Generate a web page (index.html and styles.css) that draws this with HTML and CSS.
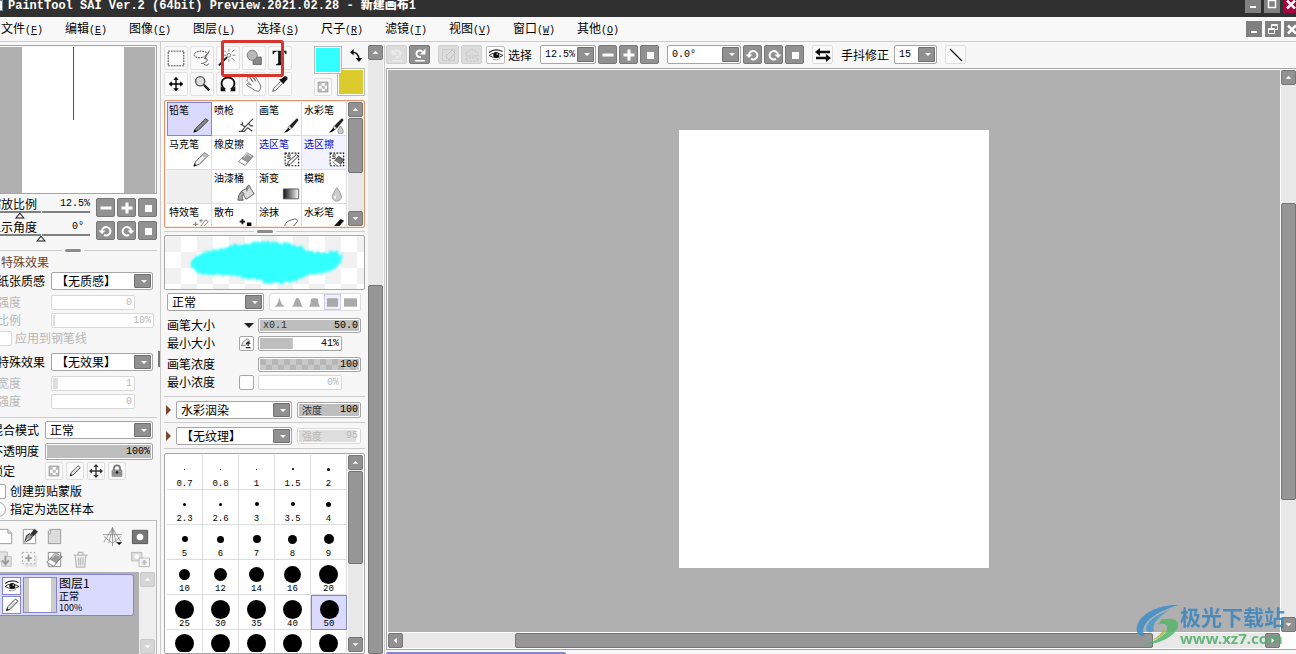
FILE: index.html
```html
<!DOCTYPE html>
<html lang="zh-CN">
<head>
<meta charset="utf-8">
<title>PaintTool SAI Ver.2</title>
<link rel="stylesheet" href="styles.css">
</head>
<body>
<svg class="defs" aria-hidden="true">
  <symbol id="minus" viewBox="0 0 16 16"><path d="M2.500 8h11" stroke="#fff" stroke-width="3"/></symbol>
  <symbol id="plus" viewBox="0 0 16 16"><path d="M2.500 8h11M8 2.500v11" stroke="#fff" stroke-width="3"/></symbol>
  <symbol id="stop" viewBox="0 0 16 16"><path d="M5 5h7v7H5z" fill="#fff"/></symbol>
  <symbol id="ccw" viewBox="0 0 16 16"><path d="M4 8a4.200 4.200 0 1 1 2 3.800" fill="none" stroke="#fff" stroke-width="2"/><path d="M0.500 7.500h7L4 11z" fill="#fff"/></symbol>
  <symbol id="cw" viewBox="0 0 16 16"><path d="M12 8a4.200 4.200 0 1 0-2 3.800" fill="none" stroke="#fff" stroke-width="2"/><path d="M8.500 7.500h7L12 11z" fill="#fff"/></symbol>
  <symbol id="up" viewBox="0 0 16 16"><path d="M4.500 9.500h7L8 6z" fill="#fff"/></symbol>
  <symbol id="down" viewBox="0 0 16 16"><path d="M4.500 6.500h7L8 10z" fill="#fff"/></symbol>
  <symbol id="left" viewBox="0 0 16 16"><path d="M9.500 4.500v7L6 8z" fill="#fff"/></symbol>
  <symbol id="right" viewBox="0 0 16 16"><path d="M6.500 4.500v7L10 8z" fill="#fff"/></symbol>
  <symbol id="redo" viewBox="0 0 16 16"><path d="M9 10H7A3.300 3.300 0 1 1 10.500 5" fill="none" stroke="#fff" stroke-width="2"/><path d="M13.500 1.500v6H8zM3 13h10v1.500H3z" fill="#fff"/></symbol>
  <symbol id="undo" viewBox="0 0 16 16"><path d="M7 10h2A3.300 3.300 0 1 0 5.500 5" fill="none" stroke="#ebebeb" stroke-width="2"/><path d="M2.500 1.500v6H8zM3 13h10v1.500H3z" fill="#ebebeb"/></symbol>
  <symbol id="eye" viewBox="0 0 16 16"><path d="M1 5.500Q7 1 14.500 4.500" fill="none" stroke="#222" stroke-width="1.200"/><path d="M1 8.500Q7 3.500 15 8.500Q8 12.500 1 8.500z" fill="#fff" stroke="#333"/><circle cx="8.300" cy="8" r="3" fill="#111"/><circle cx="9.300" cy="7" r=".8" fill="#fff"/><path d="M5 12.500q4 1 7-1" fill="none" stroke="#999"/></symbol>
  <symbol id="checker" viewBox="0 0 16 16"><path d="M2.500 2.500h11v11h-11z" fill="#fff" stroke="#777"/><path d="M3 3h3.500v3.500H3zM10 3h3v3.500h-3zM6.500 6.500H10V10H6.500zM3 10h3.500v3H3zM10 10h3v3h-3z" fill="#bbb"/></symbol>
  <symbol id="pencil" viewBox="0 0 16 16"><path d="M2.500 13.500l1.500-4 7.500-7.500 2.500 2.300-7.500 7.700z" fill="#f8f8f8" stroke="#444"/><path d="M2 14l1-3 2 2z" fill="#222"/><path d="M5.500 11l6-6" stroke="#aaa"/></symbol>
  <symbol id="move" viewBox="0 0 16 16"><path d="M8 2v12M2 8h12" stroke="currentColor" stroke-width="1.500"/><path d="M8 0l3 3.500H5zM8 16l3-3.500H5zM0 8l3.500-3v6zM16 8l-3.500-3v6z" fill="currentColor"/></symbol>
  <symbol id="lock" viewBox="0 0 16 16"><path d="M4.500 7V5a3.500 3.500 0 0 1 7 0v2" fill="none" stroke="#777" stroke-width="2"/><path d="M2.500 7h11v7h-11z" fill="#aaa" stroke="#777"/><path d="M8 8.500v4M3 9.500h10M3 11.500h10" stroke="#777"/><circle cx="8" cy="9.500" r="1.500" fill="#222"/></symbol>
  <symbol id="brush" viewBox="0 0 20 20"><path d="M8 11l8.500-8.500 2 2L11 14z" fill="#222"/><path d="M6.500 12.500L8.500 11l2 2.500-2 2z" fill="#ddd" stroke="#666" stroke-width=".7"/><path d="M7 13l2 2-3 2.500-4 1z" fill="#111"/></symbol>
  <symbol id="dashbox" viewBox="0 0 20 20"><path d="M3.500 3.500h15v14h-15z" fill="#fff" stroke="#111" stroke-width="1.200" stroke-dasharray="2 1.500"/><path d="M10 5.500H6.500v2H9v2H5.500" fill="none" stroke="#333"/></symbol>
  <symbol id="eraser" viewBox="0 0 20 20"><path d="M2 13l9-10 7 4-9 10z" fill="#999" stroke="#666" stroke-width=".8"/><path d="M2 13l3-3.500 7 4-3 3.500z" fill="#fff" stroke="#888" stroke-width=".8"/><path d="M7.500 8L11 4l5 3" fill="none" stroke="#ccc" stroke-width="1.500"/></symbol>
  <symbol id="page" viewBox="0 0 20 20"><path d="M3.500 2.500h9l4 4v11h-13z" fill="#fff" stroke="#999"/><path d="M12.500 2.500v4h4" fill="#ddd" stroke="#999"/></symbol>
</svg>

<header class="title">
  <i class="appicon"></i>
  <h1>PaintTool SAI Ver.2 (64bit) Preview.2021.02.28 - <b>新建画布1</b></h1>
  <div class="winbtns">
    <button aria-label="最小化"><svg viewBox="0 0 16 16"><path d="M5 9h6v2H5z" fill="#fff"/></svg></button>
    <button aria-label="最大化"><svg viewBox="0 0 16 16"><path d="M4.500 3.500h7v7h-7z" fill="none" stroke="#fff" stroke-width="1.500"/></svg></button>
    <button class="close" aria-label="关闭"><svg viewBox="0 0 16 16"><path d="M4 3.500l8 8M12 3.500l-8 8" stroke="#fff" stroke-width="2.500"/></svg></button>
  </div>
</header>

<nav class="menu">
  <a href="#">文件<span>(<u>F</u>)</span></a>
  <a href="#">编辑<span>(<u>E</u>)</span></a>
  <a href="#">图像<span>(<u>C</u>)</span></a>
  <a href="#">图层<span>(<u>L</u>)</span></a>
  <a href="#">选择<span>(<u>S</u>)</span></a>
  <a href="#">尺子<span>(<u>R</u>)</span></a>
  <a href="#">滤镜<span>(<u>T</u>)</span></a>
  <a href="#">视图<span>(<u>V</u>)</span></a>
  <a href="#">窗口<span>(<u>W</u>)</span></a>
  <a href="#">其他<span>(<u>O</u>)</span></a>
  <div class="winbtns">
    <button aria-label="最小化画布"><svg viewBox="0 0 16 16"><path d="M5 10h6v2H5z" fill="#fff"/></svg></button>
    <button aria-label="还原画布"><svg viewBox="0 0 16 16"><path d="M6.500 7V3.500h6v5H10M3.500 7.500h6v5h-6zM3.500 8.500h6M6.500 4.500h6" fill="none" stroke="#fff"/></svg></button>
    <button aria-label="关闭画布"><svg viewBox="0 0 16 16"><path d="M4 4.500l8 8M12 4.500l-8 8" stroke="#fff" stroke-width="2.500"/></svg></button>
  </div>
</nav>

<main class="work">
  <aside class="leftcol">
    <div class="leftin">
      <div class="navigator"><div class="navpage"><i></i></div></div>
      <div class="navrow">
        <div class="slide"><label for="zoomr">缩放比例</label><output>12.5%</output><input id="zoomr" type="range" value="26"></div>
        <button class="sq" aria-label="缩小"><svg><use href="#minus"/></svg></button><button class="sq" aria-label="放大"><svg><use href="#plus"/></svg></button><button class="sq" aria-label="重置缩放"><svg><use href="#stop"/></svg></button>
      </div>
      <div class="navrow">
        <div class="slide"><label for="rotr">显示角度</label><output>0° </output><input id="rotr" type="range" value="50"></div>
        <button class="sq" aria-label="左旋"><svg><use href="#ccw"/></svg></button><button class="sq" aria-label="右旋"><svg><use href="#cw"/></svg></button><button class="sq" aria-label="重置角度"><svg><use href="#stop"/></svg></button>
      </div>
      <div class="split nav"><i></i></div>

      <section class="fx">
        <h2>特殊效果</h2>
        <div class="row tall"><label for="paper">纸张质感</label><span class="dd wide"><select id="paper"><option>【无质感】</option></select></span></div>
        <div class="row off"><label for="f1">强度</label><span class="num short"><input id="f1" value="0" disabled></span></div>
        <div class="row off"><label for="f2">比例</label><span class="num"><input id="f2" value="10%" disabled class="f2p"></span></div>
        <div class="row off check"><input id="pen" type="checkbox" disabled><label for="pen">应用到钢笔线</label></div>
        <div class="row tall second"><label for="eff">特殊效果</label><span class="dd wide"><select id="eff"><option>【无效果】</option></select></span></div>
        <div class="row off"><label for="f3">宽度</label><span class="num short"><input id="f3" value="1" disabled class="f5p"></span></div>
        <div class="row off"><label for="f4">强度</label><span class="num short"><input id="f4" value="0" disabled></span></div>
      </section>

      <section class="blend">
        <div class="row tall"><label for="mode">混合模式</label><span class="dd wide"><select id="mode"><option>正常</option></select></span></div>
        <div class="row"><label for="op">不透明度</label><span class="num big"><input id="op" value="100%" class="full"></span></div>
        <div class="row locks"><span class="lab">锁定</span>
          <button class="ic" aria-label="锁定透明"><svg><use href="#checker"/></svg></button>
          <button class="ic" aria-label="锁定绘画"><svg><use href="#pencil"/></svg></button>
          <button class="ic" aria-label="锁定移动"><svg><use href="#move"/></svg></button>
          <button class="ic" aria-label="全部锁定"><svg><use href="#lock"/></svg></button>
        </div>
        <div class="row check"><input id="clip" type="checkbox"><label for="clip">创建剪贴蒙版</label></div>
        <div class="row check"><input id="sel" type="radio"><label for="sel">指定为选区样本</label></div>
      </section>

      <section class="layers">
        <div class="ltools">
          <button aria-label="新建图层"><svg><use href="#page"/></svg></button>
          <button aria-label="新建钢笔图层"><svg viewBox="0 0 20 20"><path d="M3.500 2.500h13v15h-13z" fill="#fff" stroke="#999"/><path d="M5 16l2-7 3-2 3 3-2 3z" fill="#999" stroke="#222"/><path d="M11 7l4-5 4 3-5 5z" fill="#333"/><path d="M5 16l4-4" stroke="#fff"/></svg></button>
          <button aria-label="新建图层组"><svg viewBox="0 0 20 20"><path d="M3.500 4.500l2-2h11v15h-13z" fill="#ddd" stroke="#999"/><path d="M6 3v4l-2 1" fill="none" stroke="#aaa"/></svg></button>
          <span></span>
          <button aria-label="透视尺"><svg viewBox="0 0 20 20"><path d="M10 0v20M0 8h20M10 1L1 16M10 1l9 15M1 10l9 7 9-7M10 1L6 17M10 1l4 16" fill="none" stroke="#888" stroke-width=".8"/><path d="M14 16h6l-3 3z" fill="#000"/></svg></button>
          <button aria-label="图层蒙版"><svg viewBox="0 0 20 20"><path d="M1.500 3.500h16v14h-16z" fill="#777" stroke="#555"/><circle cx="9.500" cy="10.500" r="3.500" fill="#fff"/></svg></button>
          <button aria-label="向下转写"><svg viewBox="0 0 20 20"><path d="M3 2h9v5h4v10H6v-5H3z" fill="#e4e4e4" stroke="#bbb"/><path d="M10 6v8M6.500 11l3.500 4 3.500-4" fill="none" stroke="#999" stroke-width="2"/></svg></button>
          <button aria-label="复制图层"><svg viewBox="0 0 20 20"><path d="M5 6h13v12H5z" fill="#e4e4e4"/><path d="M2.500 2.500h13v12h-13z" fill="#f4f4f4" stroke="#aaa" stroke-dasharray="2 2"/><path d="M9 5v7M5.500 8.500h7" stroke="#999" stroke-width="2"/></svg></button>
          <button aria-label="清除图层"><svg viewBox="0 0 20 20"><path d="M3.500 2.500h13v15h-13z" fill="#fff" stroke="#888"/><use href="#eraser"/></svg></button>
          <button aria-label="删除图层"><svg viewBox="0 0 20 20"><path d="M2.500 5.500h15M7.500 5V2.500h5V5M4.500 6l1 12h9l1-12M8 8v8M10 8v8M12.500 8v8" fill="#eee" stroke="#bbb" stroke-width="1.300"/></svg></button>
          <span></span>
          <button aria-label="应用蒙版"><svg viewBox="0 0 20 20"><path d="M.5 2.500h11v9H.5z" fill="#ddd" stroke="#bbb"/><circle cx="6" cy="7" r="2.500" fill="#fff"/><path d="M8.500 8.500h11v9h-11z" fill="#f4f4f4" stroke="#bbb"/><path d="M14 10.500v5M11.500 13h5" stroke="#bbb" stroke-width="2"/></svg></button>
        </div>
        <div class="lbody">
          <div class="llist">
            <div class="layer">
              <div class="lflags"><button aria-label="显示"><svg><use href="#eye"/></svg></button><button aria-label="编辑"><svg><use href="#pencil"/></svg></button></div>
              <div class="thumb"></div>
              <div class="ltext"><b>图层1</b><span>正常</span><span>100%</span></div>
            </div>
          </div>
          <div class="sb pale"><button class="sbb" aria-label="向上"><svg><use href="#up"/></svg></button><span class="track"></span><button class="sbb" aria-label="向下"><svg><use href="#down"/></svg></button></div>
        </div>
      </section>
    </div>
    <i class="grip"></i>
  </aside>

  <aside class="midcol">
    <div class="mid">
      <div class="tools">
        <div class="tgrid">
          <button aria-label="矩形选择"><svg viewBox="0 0 24 24"><path d="M3.500 4.500h17v16h-17z" fill="none" stroke="#333" stroke-dasharray="2 1"/></svg></button>
          <button aria-label="套索"><svg viewBox="0 0 24 24"><path d="M17 6C12 3 3 5 3.500 9c.5 3 8 4 11 1" fill="none" stroke="#333" stroke-dasharray="2 1"/><path d="M20 4l-5 9q3-1 3 1t-5 4l-2 0M15 13c0-4 3-6 4-7M14 19q5 2 5-1" fill="none" stroke="#555"/></svg></button>
          <button aria-label="魔棒"><svg viewBox="0 0 24 24"><path d="M2 20l9-9" stroke="#111" stroke-width="2"/><circle cx="13" cy="9" r="2" fill="#fff" stroke="#777"/><path d="M13 2v3M13 13v3M17 9h3M7 9h3M16 6l3-3M8 4l2 2M16 12l3 3" stroke="#777"/></svg></button>
          <button aria-label="形状"><svg viewBox="0 0 24 24"><path d="M11 11h9v8h-9z" fill="#888" stroke="#666"/><circle cx="10" cy="9" r="5.500" fill="#b8b8b8" stroke="#777"/></svg></button>
          <button aria-label="文字"><svg viewBox="0 0 24 24"><path d="M4 4h15v4h-1q-.5-3-3-3h-2v12q0 2 2.500 2v1h-8v-1q2.500 0 2.500-2V5H8Q5.500 5 5 8H4z" fill="#111"/></svg></button>
          <button aria-label="移动"><svg viewBox="-4 -4 24 24"><use href="#move" width="16" height="16"/></svg></button>
          <button aria-label="缩放"><svg viewBox="0 0 24 24"><circle cx="10" cy="9" r="5" fill="#ddd" stroke="#555" stroke-width="1.500"/><path d="M14 13l6 6" stroke="#222" stroke-width="2.500"/></svg></button>
          <button aria-label="旋转"><svg viewBox="0 0 24 24"><path d="M9 18C2 13 5 5 12 5s10 8 3 13" fill="none" stroke="#111" stroke-width="2"/><path d="M4 14.500V20h6zM20 14.500V20h-6z" fill="#111"/></svg></button>
          <button aria-label="抓手"><svg viewBox="0 0 24 24"><path d="M5 6c-1-2 1-2 2-1l4 5-3-5c-1-2 1-3 2-1l4 5-2-4c0-2 2-2 2 0l5 8c1 3 0 5-2 7q-4 0-7-3l-5-3c-2-1-1-3 1-2l3 1-4-4c-1-1-1-2 0-2" fill="#fff" stroke="#666"/></svg></button>
          <button aria-label="吸管"><svg viewBox="0 0 24 24"><path d="M4 20l1-3 8-8 2 2-8 8z" fill="#fff" stroke="#555"/><path d="M11 7l5 5 1-2 3-3q1-4-3-3.500L14 6z" fill="#111"/></svg></button>
        </div>
        <div class="colors">
          <button class="fg" aria-label="前景色"></button>
          <button class="bg" aria-label="背景色"></button>
          <svg class="swap" viewBox="0 0 16 16"><path d="M3 4q7 0 8 8" fill="none" stroke="#111" stroke-width="1.800"/><path d="M0 4l4.500-4v8zM11 16l-4-5h8z" fill="#111"/></svg>
          <button class="ic trans" aria-label="透明色"><svg><use href="#checker"/></svg></button>
        </div>
      </div>

      <div class="brushes">
        <div class="bgrid">
          <button class="on">铅笔<svg viewBox="0 0 20 20"><path d="M2 18l2-4L15 3l3 2L7 16z" fill="#888" stroke="#333"/><path d="M2 18l1-3 2 2z"/></svg></button>
          <button>喷枪<svg viewBox="0 0 20 20"><path d="M4 9l5 3 9-9M2 17h6l4-4 5 4M9 12l-4 5M13 8l2 3h3M6 7v3" fill="none" stroke="#444" stroke-width="1.300"/></svg></button>
          <button>画笔<svg><use href="#brush"/></svg></button>
          <button>水彩笔<svg viewBox="0 0 20 20"><use href="#brush"/><path d="M15 11q-3 5-3 6a3 3 0 0 0 6 0q0-2-3-6z" fill="#ccc" stroke="#888"/></svg></button>
          <button>马克笔<svg viewBox="0 0 20 20"><path d="M2 18l2-5L14 3l4 3L8 16z" fill="#eee" stroke="#444"/><path d="M2 18l1-3 2 2z"/><path d="M14 3l4 3-3 3-4-3z" fill="#bbb"/></svg></button>
          <button>橡皮擦<svg><use href="#eraser"/></svg></button>
          <button class="blue">选区笔<svg viewBox="0 0 20 20"><use href="#dashbox"/><path d="M6 17l1-4 9-8 2 2-9 9z" fill="#fff" stroke="#222"/></svg></button>
          <button class="blue tint">选区擦<svg viewBox="0 0 20 20"><use href="#dashbox"/><path d="M7 14l6-7 6 4-6 7z" fill="#777" stroke="#333"/><path d="M7 14l2-2 6 4-2 2z" fill="#fff"/></svg></button>
          <button class="none" aria-label="空"></button>
          <button>油漆桶<svg viewBox="0 0 20 20"><path d="M5 8l9-5 5 8-9 6z" fill="#ddd" stroke="#555"/><path d="M11 8V3q2-3 4 0M5 8q-4 4-4 10h6q-3-4 1-7z" fill="#aaa" stroke="#555"/></svg></button>
          <button>渐变<svg viewBox="0 0 20 20"><defs><linearGradient id="gr"><stop stop-color="#111"/><stop offset="1" stop-color="#fff"/></linearGradient></defs><path d="M1.500 5.500h17v11h-17z" fill="url(#gr)" stroke="#555"/></svg></button>
          <button>模糊<svg viewBox="0 0 20 20"><path d="M11 4q-5 7-5 10a5 5 0 0 0 10 0q0-3-5-10z" fill="#ccc" stroke="#999"/><path d="M9 13v3" stroke="#fff" stroke-width="2"/></svg></button>
          <button>特效笔<svg viewBox="0 0 20 20"><path d="M9 10l6-8 3 2-7 8M4 4v6M1 7h6M10 1v4M8 3h4" fill="none" stroke="#777"/></svg></button>
          <button>散布<svg viewBox="0 0 20 20"><path d="M6 1v6M3 4h6" stroke="#111" stroke-width="2"/><path d="M11 5h5v4h-5z"/></svg></button>
          <button>涂抹<svg viewBox="0 0 20 20"><path d="M3 10q0-5 5-7l6-2q4 0 3 3l-5 6" fill="#fff" stroke="#555"/></svg></button>
          <button>水彩笔<svg viewBox="0 0 20 20"><path d="M5 12l10-11 4 2-9 10z" fill="#111"/></svg></button>
        </div>
        <div class="sb"><button class="sbb" aria-label="向上"><svg><use href="#up"/></svg></button><span class="grab g55"></span><span class="track"></span><button class="sbb" aria-label="向下"><svg><use href="#down"/></svg></button></div>
      </div>
      <div class="split small"><i></i></div>

      <div class="preview">
        <svg viewBox="0 0 200 53" preserveAspectRatio="none"><defs><filter id="soft" x="-5%" y="-20%" width="110%" height="140%"><feTurbulence type="fractalNoise" baseFrequency=".35 .05" numOctaves="2" result="n"/><feDisplacementMap in="SourceGraphic" in2="n" scale="7" yChannelSelector="G" xChannelSelector="B"/><feGaussianBlur stdDeviation=".9"/></filter></defs>
        <path filter="url(#soft)" d="M26 29C25 20 42 16 58 12S85 6 104 6s30 4 42 9 22-1 28 1 3 12-4 17-20 3-33 9-23 6-36 4-27-7-42-7-32 1-33-10z" fill="#3ff"/></svg>
      </div>

      <div class="moderow">
        <span class="dd wide"><select aria-label="笔刷模式"><option>正常</option></select></span>
        <div class="shapes">
          <button aria-label="形状一"><svg viewBox="0 0 14 11"><path d="M1 10q4-1 6-10 2 9 6 10z"/></svg></button>
          <button aria-label="形状二"><svg viewBox="0 0 14 11"><path d="M1 10q2-1 3-6 3-7 6 0 1 5 3 6z"/></svg></button>
          <button aria-label="形状三"><svg viewBox="0 0 14 11"><path d="M1 10q2-2 2-8l2-1h4l2 1q0 6 2 8z"/></svg></button>
          <button class="on" aria-label="形状四"><svg viewBox="0 0 14 11"><path d="M1 10V2l1-1h10l1 1v8z"/></svg></button>
          <button aria-label="形状五"><svg viewBox="0 0 14 11"><path d="M0 1h14v9H0z"/></svg></button>
        </div>
      </div>

      <div class="params">
        <div class="prow"><label for="p1">画笔大小</label><i class="tri"></i><span class="num big"><em>x0.1</em><input id="p1" value="50.0" class="full"></span></div>
        <div class="prow"><label for="p2">最小大小</label><button class="mini" aria-label="压感"><svg viewBox="0 0 16 16"><path d="M2 11l1-4 6-5 3 3-5 5z" fill="#eee" stroke="#666"/><path d="M10 6v5M7.500 8.500L10 6l2.500 2.500M7 13h6" fill="none" stroke="#222" stroke-width="1.500"/></svg></button><span class="num big short"><input id="p2" value="41%" class="f41p"></span></div>
        <div class="prow gapped"><label for="p3">画笔浓度</label><i></i><span class="num big"><input id="p3" value="100" class="chk"></span></div>
        <div class="prow"><label for="p4">最小浓度</label><input type="checkbox" aria-label="浓度压感"><span class="num short off"><input id="p4" value="0%" disabled></span></div>
      </div>

      <div class="tex"><i></i><span class="dd"><select aria-label="混色"><option>水彩洇染</option></select></span><span class="num big"><label for="p5">浓度</label><input id="p5" value="100" class="full"></span></div>
      <div class="tex"><i></i><span class="dd"><select aria-label="纹理"><option>【无纹理】</option></select></span><span class="num big off"><label for="p6">强度</label><input id="p6" value="95" class="f95p" disabled></span></div>

      <div class="sizes">
        <div class="sgrid">
          <button><i style="width:1px"></i>0.7</button><button><i style="width:1px"></i>0.8</button><button><i style="width:1px"></i>1</button><button><i style="width:2px"></i>1.5</button><button><i style="width:3px"></i>2</button>
          <button><i style="width:3px"></i>2.3</button><button><i style="width:3px"></i>2.6</button><button><i style="width:4px"></i>3</button><button><i style="width:4px"></i>3.5</button><button><i style="width:5px"></i>4</button>
          <button><i style="width:6px"></i>5</button><button><i style="width:7px"></i>6</button><button><i style="width:8px"></i>7</button><button><i style="width:9px"></i>8</button><button><i style="width:10px"></i>9</button>
          <button><i style="width:11px"></i>10</button><button><i style="width:13px"></i>12</button><button><i style="width:15px"></i>14</button><button><i style="width:17px"></i>16</button><button><i style="width:19px"></i>20</button>
          <button><i style="width:19px"></i>25</button><button><i style="width:19px"></i>30</button><button><i style="width:19px"></i>35</button><button><i style="width:19px"></i>40</button><button class="on"><i style="width:19px"></i>50</button>
          <button aria-label="60"><i style="width:19px"></i></button><button aria-label="70"><i style="width:19px"></i></button><button aria-label="80"><i style="width:19px"></i></button><button aria-label="100"><i style="width:19px"></i></button><button aria-label="120"><i style="width:19px"></i></button>
        </div>
        <div class="sb"><button class="sbb" aria-label="向上"><svg><use href="#up"/></svg></button><span class="grab g93"></span><span class="track"></span><button class="sbb" aria-label="向下"><svg><use href="#down"/></svg></button></div>
      </div>
    </div>
    <div class="sb outer"><button class="sbb" aria-label="向上"><svg><use href="#up"/></svg></button><span class="track t225"></span><span class="grab fill"></span></div>
    <div class="mark"></div>
  </aside>

  <section class="stage">
    <div class="toolbar">
      <button class="sq w dim" aria-label="撤销"><svg><use href="#undo"/></svg></button>
      <button class="sq w" aria-label="重做"><svg><use href="#redo"/></svg></button>
      <button class="sq w dim g8" aria-label="取消选择"><svg viewBox="0 0 16 16"><path d="M1.500 2.500h12v11h-12z" fill="none" stroke="#c4c4c4" stroke-dasharray="2 1"/><path d="M5 9l6-6 3 3-6 7z" fill="#ddd" stroke="#c4c4c4"/></svg></button>
      <button class="sq w dim" aria-label="反选"><svg viewBox="0 0 16 16"><path d="M2 6q6-6 12 0v3H2zM2 11h12v3H2z" fill="none" stroke="#c4c4c4" stroke-dasharray="2 1"/></svg></button>
      <label class="eyebox"><button class="eyebtn" aria-label="显示选区"><svg><use href="#eye"/></svg></button>选择</label>
      <span class="dd n z"><select aria-label="缩放"><option>12.5%</option></select></span>
      <button class="sq" aria-label="缩小"><svg><use href="#minus"/></svg></button>
      <button class="sq" aria-label="放大"><svg><use href="#plus"/></svg></button>
      <button class="sq" aria-label="原始大小"><svg><use href="#stop"/></svg></button>
      <span class="dd n r"><select aria-label="角度"><option>0.0°</option></select></span>
      <button class="sq" aria-label="左旋"><svg><use href="#ccw"/></svg></button>
      <button class="sq" aria-label="右旋"><svg><use href="#cw"/></svg></button>
      <button class="sq" aria-label="重置角度"><svg><use href="#stop"/></svg></button>
      <button class="ic w g8" aria-label="水平翻转"><svg viewBox="0 0 16 16"><path d="M3 5h12M1 11h12" stroke="#111" stroke-width="2.500"/><path d="M0 5l5-4v8zM16 11l-5-4v8z" fill="#111"/></svg></button>
      <label class="stab" for="stab">手抖修正</label>
      <span class="dd n s"><select id="stab"><option>15</option></select></span>
      <button class="ic g8" aria-label="直线"><svg viewBox="0 0 16 16"><path d="M2 2l12 12" stroke="#111" stroke-width="1.300"/></svg></button>
    </div>
    <div class="frame">
      <div class="canvas"><div class="paper"></div></div>
      <div class="sb v"><button class="sbb" aria-label="向上"><svg><use href="#up"/></svg></button><span class="track" style="flex:117"></span><span class="grab" style="flex:299"></span><span class="track" style="flex:116"></span><button class="sbb" aria-label="向下"><svg><use href="#down"/></svg></button></div>
      <div class="sb h"><button class="sbb" aria-label="向左"><svg><use href="#left"/></svg></button><span class="track" style="flex:111"></span><span class="grab" style="flex:639"></span><span class="track" style="flex:111"></span><button class="sbb" aria-label="向右"><svg><use href="#right"/></svg></button></div>
    </div>
    <div class="tabs"><i></i></div>
  </section>
</main>

<div class="highlight"></div>
<div class="brandmark">
  <svg viewBox="0 0 44 42"><path d="M43 1C24 0 4 9 1 22c-2 9 4 10 8 10C4 26 8 11 43 1z" fill="#3f8fc8"/><path d="M34 6C20 10 10 18 10 25c0 4 5 4 8 2-3-7 5-15 16-21z" fill="#4a9ad0"/><path d="M26 15c6 0 15-2 16 5 1 10-16 20-35 21 12-4 25-10 24-18 0-4-6-4-9-2 2-2 2-4 4-6z" fill="#57b56a"/><path d="M8 38c10-1 18-8 19-13 5 1 2 10-19 13z" fill="#a8b84a"/></svg>
  <div><b>极光下载站</b><a href="#">www.xz7.com</a></div>
</div>
</body>
</html>
```

FILE: styles.css
```css
* { box-sizing: border-box; }
html, body { height: 100%; }
body {
  margin: 0;
  display: flex;
  flex-direction: column;
  overflow: hidden;
  background: #f7f7f7;
  color: #000;
  font: 12px/14px "Noto Sans CJK SC", sans-serif;
}
button, input, select { font: inherit; color: inherit; margin: 0; }
button { padding: 0; border: 0; background: none; display: flex; align-items: center; justify-content: center; }
svg { display: block; width: 16px; height: 16px; flex: none; }
i, em { font-style: normal; }
h1, h2 { margin: 0; }
label, .lab { white-space: nowrap; }
.defs { position: absolute; width: 0; height: 0; }
.title h1, .menu span, .n select, .num input, .num em, .slide output, .sgrid button {
  font-family: "Liberation Mono", "Noto Sans CJK SC", monospace;
}

/* title and menu */
.title { flex: none; display: flex; height: 17px; background: #303030; color: #fff; overflow: hidden; }
.appicon { width: 3px; height: 11px; margin-right: 5px; background: #fff; border: 1px solid #78a; border-left: 0; }
.title h1 { font-size: 12px; line-height: 12px; font-weight: bold; white-space: pre; }
.winbtns { display: flex; gap: 3px; margin-left: auto; margin-right: -3px; }
.winbtns button { width: 16px; height: 16px; background: #808080; }
.title .winbtns button { height: 13px; align-items: flex-end; }
.title .winbtns .close { background: #a8003c; }
.menu { flex: none; display: flex; gap: 22px; align-items: center; height: 25px; padding-left: 1px; border-bottom: 1px solid #ccc; background: #f8f8f8; }
.menu a { width: 42px; white-space: nowrap; color: #000; text-decoration: none; }
.menu span { font-size: 10px; }
.menu .winbtns { margin-right: -4px; }

.work { flex: 1; min-height: 0; display: flex; }

/* shared controls */
.sq { width: 19px; height: 19px; background: #919191; border: 1px solid #777; border-radius: 2px; }
.w { width: 21px; }
.dim { background: #dcdcdc; border-color: #d0d0d0; }
.ic { width: 18px; height: 18px; background: #fafafa; border: 1px solid #dedede; border-radius: 2px; color: #333; }
.ic svg { width: 14px; height: 14px; }
.dd { position: relative; display: block; height: 18px; min-width: 0; }
.dd select { display: block; width: 100%; height: 100%; padding: 0 18px 0 4px; border: 1px solid #a6a6a6; border-radius: 2px; background: #fff; appearance: none; line-height: 14px; outline: 0; }
.dd::before { content: ""; position: absolute; right: 2px; top: 2px; bottom: 2px; width: 15px; background: #909090; border: 1px solid #707070; border-radius: 1px; }
.dd::after { content: ""; position: absolute; right: 6px; top: 8px; border: 3px solid transparent; border-top-color: #fff; border-bottom: 0; }
.dd.n select { font-size: 10px; }
.num { position: relative; display: block; height: 15px; padding: 1px; border: 1px solid #a6a6a6; border-radius: 2px; background: #fff; font-size: 10px; line-height: 11px; }
.num input { display: block; width: 100%; height: 100%; padding: 0 1px; border: 0; text-align: right; background: none; background-repeat: no-repeat; outline: 0; }
.num em, .num label { position: absolute; left: 4px; top: 1px; color: #333; }
.num .full { background: #bebebe; }
.num .f2p { background-image: linear-gradient(#ddd, #ddd); background-size: 2% 100%; }
.num .f5p { background-image: linear-gradient(#ddd, #ddd); background-size: 6% 100%; }
.num .f41p { background-image: linear-gradient(#bebebe, #bebebe); background-size: 41% 100%; }
.num .f95p { background-image: linear-gradient(#dedede, #dedede); background-size: 95% 100%; }
.num .chk { background: repeating-conic-gradient(#c8c8c8 0 25%, #b6b6b6 0 50%) 0 0 / 12px 12px; }
.off, .off input, .off label { color: #b8b8b8; }
.off .num, .num.off { border-color: #d8d8d8; }
input[type=checkbox], input[type=radio] { appearance: none; flex: none; width: 15px; height: 15px; border: 1px solid #a6a6a6; border-radius: 2px; background: #fff; }
input[type=radio] { border-radius: 8px; }
.off input[type=checkbox] { border-color: #d8d8d8; }
.split { display: flex; align-items: center; height: 12px; gap: 3px; }
.split::before, .split::after { content: ""; flex: 1; border-top: 1px solid #ccc; }
.split i { width: 16px; height: 3px; background: #8c8c8c; border-radius: 2px; }
.split.nav { padding-left: 11px; padding-top: 2px; }
.split.nav::before { flex: none; width: 62px; }
.split.small { height: 7px; }

/* scroll bars */
.sb { display: flex; flex-direction: column; gap: 1px; width: 15px; background: #e8e8e8; }
.sbb { flex: none; width: 15px; height: 15px; background: #919191; border: 1px solid #777; border-radius: 2px; }
.sbb svg { width: 13px; height: 13px; }
.track { flex: 1; }
.grab { background: #969696; border: 1px solid #747474; border-radius: 2px; }
.g55 { height: 55px; }
.g93 { height: 93px; }
.pale { background: #efefef; }
.pale .sbb { background: #d6d6d6; border-color: #c8c8c8; }
.sb.h { flex-direction: row; width: auto; height: 15px; }

/* navigator and layer column */
.leftcol { position: relative; flex: none; width: 161px; border-right: 1px solid #ccc; overflow: hidden; }
.leftin { height: 100%; margin-left: -11px; margin-right: 3px; padding-top: 3px; display: flex; flex-direction: column; }
.leftin > * { flex: none; }
.grip { position: absolute; right: 0; top: 309px; width: 2px; height: 16px; background: #777; }
.navigator { height: 149px; padding: 1px 1px 0 0; border: 1px solid #a6a6a6; margin-bottom: 3px; }
.navpage { height: 100%; margin: 0 31px 0 32px; background: #fff; box-shadow: -40px 0 #b0b0b0, 31px 0 #b0b0b0; }
.navpage i { display: block; width: 1px; height: 73px; margin-left: 51px; background: #555; }
.navrow { display: flex; gap: 2px; height: 23px; padding-top: 1px; }
.slide { width: 101px; margin-right: 4px; display: grid; grid-template-columns: 1fr auto; grid-template-rows: 12px 9px; line-height: 12px; }
.slide output { font-size: 10px; white-space: pre; }
.slide input { grid-column: 1 / 3; width: 98px; height: 9px; margin: 0 0 0 3px; appearance: none; background: linear-gradient(90deg, #808080 49px, #fff 49px 50px, #808080 50px) 0 1px / 100% 2px no-repeat; }
.slide input::-webkit-slider-thumb { appearance: none; width: 10px; height: 6px; margin-top: 2px; background: #111; clip-path: polygon(evenodd, 50% 0, 100% 100%, 0 100%, 50% 0, 50% 25%, 20% 82%, 80% 82%, 50% 25%); }
.fx { padding: 0 4px 7px 8px; border-bottom: 1px solid #ccc; }
.fx h2 { padding-left: 4px; font-size: 12px; line-height: 13px; font-weight: normal; color: #6d4432; }
.row { display: flex; align-items: center; height: 18px; }
.fx .row > label, .fx .row > .num { flex: none; }
.fx .row > label { width: 54px; }
.tall { height: 25px; }
.second { padding-top: 3px; height: 27px; }
.wide { flex: 1; }
.fx .num { width: 103px; }
.num.short, .fx .num.short { width: 84px; }
.check input + label { margin-left: 3px; }
.blend { padding: 0 4px 2px 2px; }
.blend .tall { height: 24px; }
.blend .row > label:first-child, .blend .lab { width: 54px; flex: none; }
.blend .num { flex: 1; height: 17px; line-height: 13px; }
.locks { gap: 3px; height: 22px; }
.locks .lab { margin-right: -3px; }
.blend .check input + label { margin-left: 4px; }

.layers { min-height: 0; display: flex; flex-direction: column; border: 1px solid #bbb; border-bottom: 0; }
.leftin > .layers { flex: 1; }
.ltools { display: grid; grid-template-columns: 22px 26px 24px 1fr 35px 21px; grid-template-rows: 23px 23px; padding: 4px 5px 1px 4px; align-items: center; }
.ltools svg { width: 19px; height: 19px; }
.lbody { flex: 1; min-height: 0; display: flex; }
.llist { flex: 1; padding: 2px 5px 0 0; background: #b0b0b0; }
.lbody .sb { width: 17px; padding-left: 1px; }
.layer { display: flex; gap: 2px; padding: 2px 0 2px 11px; height: 42px; border: 1px solid #8484d0; border-radius: 3px; background: #dadaff; }
.lflags { display: grid; gap: 1px; }
.lflags button { width: 19px; height: 18px; background: #fff; border: 1px solid #8484d0; }
.thumb { width: 34px; border: 1px solid #8484d0; background: linear-gradient(90deg, #ccc 5px, #fff 5px 27px, #ccc 27px); }
.ltext { display: grid; grid-template-rows: 13px 12px 11px; font-size: 10px; line-height: 12px; }
.ltext b { font-size: 12px; font-weight: normal; }
.ltext span:last-child { font-size: 9px; }

/* tool column */
.midcol { flex: none; display: flex; width: 225px; padding-left: 3px; padding-top: 3px; }
.mid { width: 201px; display: flex; flex-direction: column; }
.mid > * { flex: none; }
.outer { margin-left: 3px; }
.t225 { flex: 0 0 223px; }
.fill { flex: 1; }
.mark { width: 1px; margin-left: 1px; background: #ccc; }
.tools { display: flex; justify-content: space-between; padding: 1px 0 4px; }
.tgrid { display: grid; grid-template-columns: repeat(5, 24px); gap: 2px; }
.tgrid button { height: 24px; border: 1px solid #e2e2e2; border-radius: 2px; background: #fafafa; }
.tgrid svg { width: 22px; height: 22px; }
.colors { position: relative; width: 51px; height: 50px; }
.colors > * { position: absolute; }
.fg, .bg { width: 28px; height: 28px; border: 1px solid #b4bcbc; box-shadow: inset 0 0 0 1px #fff; }
.fg { left: 0; top: 0; background: #3ff; z-index: 1; }
.bg { right: 0; bottom: 0; background: #dccb2c; }
.swap { right: 2px; top: 3px; width: 13px; height: 13px; }
.trans { left: 0; bottom: 0; }
.brushes, .sizes { display: flex; padding: 1px 1px 1px 2px; background: #fff; border: 1px solid #a6a6a6; border-radius: 2px; }
.brushes { height: 128px; border-color: #dd9870; box-shadow: inset 0 0 0 1px #fbe6da; }
.bgrid, .sgrid { flex: 1; min-height: 0; overflow: hidden; display: grid; }
.bgrid { grid-template-columns: repeat(4, 45px); grid-auto-rows: 34px; }
.bgrid button { position: relative; align-items: flex-start; justify-content: flex-start; padding: 1px 2px; border: solid #ddd; border-width: 0 1px 1px 0; font-size: 10px; line-height: 14px; white-space: nowrap; }
.bgrid svg { position: absolute; right: 1px; bottom: 1px; width: 18px; height: 18px; }
.bgrid .on { border: 1px solid #8484d0; background: #dadaff; padding: 0 1px; }
.bgrid .blue { color: #0a0ac8; }
.bgrid .tint { background: #f3f3ff; }
.bgrid .none { background: #f0f0f0; }
.preview { height: 55px; border: 1px solid #a6a6a6; border-radius: 2px; background: repeating-conic-gradient(#fff 0 25%, #f1f1f1 0 50%) 0 0 / 32px 32px; }
.preview svg { width: 100%; height: 53px; }
.moderow { display: flex; gap: 5px; padding: 3px 4px 5px 3px; }
.shapes { display: flex; width: 92px; height: 18px; padding: 0 1px; border: 1px solid #ddd; border-radius: 2px; background: #fff; }
.shapes button { flex: 1; }
.shapes svg { width: 13px; height: 11px; fill: #aaa; }
.shapes .on { background: #f0f0ff; box-shadow: inset 0 0 0 1px #ccccf0; }
.params { padding: 0 0 5px 3px; border-bottom: 1px solid #ccc; }
.prow { display: grid; grid-template-columns: 72px 19px 103px; align-items: center; height: 18px; }
.gapped { height: 21px; padding-top: 3px; }
.tri { justify-self: center; border: 5px solid transparent; border-top-color: #222; border-bottom: 0; }
.mini { width: 15px; height: 15px; background: #fff; border: 1px solid #a6a6a6; border-radius: 2px; }
.mini svg { width: 13px; height: 13px; }
.tex { display: flex; align-items: center; height: 26px; padding: 0 4px 0 2px; border-bottom: 1px solid #ccc; }
.tex > i { border: 5px solid transparent; border-left-color: #7a4630; border-right: 0; margin-right: 5px; }
.tex .dd { flex: 1; margin-right: 5px; }
.tex .num { width: 64px; height: 16px; line-height: 12px; }
.sizes { min-height: 0; margin-top: 4px; }
.mid > .sizes { flex: 1; }
.sgrid { grid-template-columns: repeat(5, 36px); grid-auto-rows: 35px; }
.sgrid button { flex-direction: column; justify-content: flex-start; padding: 3px 0 0; border: solid #ddd; border-width: 0 1px 1px 0; font-size: 9px; line-height: 9px; }
.sgrid i { aspect-ratio: 1; border-radius: 50%; background: #000; margin: auto; }
.sgrid .on { border: 1px solid #8484d0; background: #dadaff; padding: 2px 0 0; }
.sgrid button:nth-child(n+26) { padding-bottom: 10px; }

/* canvas area */
.stage { flex: 1; min-width: 0; display: flex; flex-direction: column; }
.toolbar { flex: none; display: flex; align-items: center; gap: 2px; height: 26px; padding-bottom: 1px; }
.toolbar .sq, .toolbar .dd, .toolbar .ic { flex: none; height: 19px; }
.toolbar .ic { width: 21px; }
.toolbar .g8 { margin-left: 6px; }
.toolbar .ic svg { width: 16px; height: 16px; }
.eyebox { display: flex; align-items: center; gap: 3px; margin: 0 6px 0 2px; }
.eyebtn { width: 19px; height: 18px; border: 1px solid #bbb; background: #fff; border-radius: 2px; }
.z { width: 56px; }
.r { width: 74px; margin-left: 6px; }
.stab { margin-left: 6px; }
.s { width: 43px; margin-left: 3px; }
.frame { flex: 1; min-height: 0; display: grid; grid-template-columns: 1fr 15px; grid-template-rows: 1fr 15px; gap: 1px; padding: 1px 0 1px 1px; border: 1px solid #a6a6a6; border-right: 0; background: #fff; }
.canvas { display: flex; align-items: center; justify-content: center; background: #b0b0b0; padding-bottom: 5px; }
.paper { width: 310px; aspect-ratio: 310 / 438; background: #fff; }
.tabs { flex: none; height: 4px; padding-top: 2px; }
.tabs i { display: block; width: 180px; height: 2px; background: #8484d0; border-radius: 2px 2px 0 0; }

/* overlays */
.highlight { position: absolute; left: 221px; top: 40px; width: 63px; height: 37px; border: 3px solid #d9342c; border-radius: 3px; }
.brandmark { position: absolute; right: 11px; bottom: 7px; display: flex; opacity: .85; }
.brandmark svg { width: 44px; height: 42px; }
.brandmark b { display: block; font: bold 21px/25px "Noto Sans CJK SC", sans-serif; color: #3a84bf; }
.brandmark a { display: block; font: bold 15px/18px "Noto Sans", sans-serif; color: #4fae68; text-decoration: none; }
```
